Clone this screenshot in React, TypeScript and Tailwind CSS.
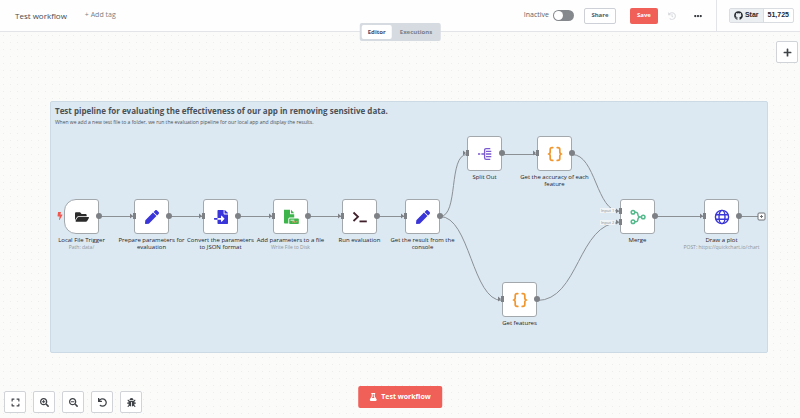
import type { ReactNode } from "react";
import {
  FaBolt,
  FaBug,
  FaEllipsisH,
  FaExpand,
  FaFileImport,
  FaFlask,
  FaFolderOpen,
  FaGithub,
  FaHistory,
  FaPen,
  FaPlus,
  FaSearchMinus,
  FaSearchPlus,
  FaUndo,
} from "react-icons/fa";

type FlowNode = {
  id: string;
  x: number;
  y: number;
  label: string;
  note?: string;
  icon: ReactNode;
  trigger?: boolean;
  inputs?: number[];
};

const BracesIcon = () => (
  <svg viewBox="0 0 16 16" className="size-4" fill="none" stroke="#f0962e" strokeWidth="1.7" strokeLinecap="round" strokeLinejoin="round">
    <path d="M5.8 1.6H5C3.8 1.6 3.2 2.3 3.2 3.4v2.4c0 1.2-.6 2.2-1.7 2.2 1.1 0 1.7 1 1.7 2.2v2.4c0 1.1.6 1.8 1.8 1.8h.8" />
    <path d="M10.2 1.6h.8c1.2 0 1.8.7 1.8 1.8v2.4c0 1.2.6 2.2 1.7 2.2-1.1 0-1.7 1-1.7 2.2v2.4c0 1.1-.6 1.8-1.8 1.8h-.8" />
  </svg>
);

const TerminalIcon = () => (
  <svg viewBox="0 0 16 16" className="size-4" fill="none" stroke="#40202a" strokeWidth="1.8">
    <path d="M1.5 3.5 6 7.8 1.5 12" />
    <path d="M7.5 12.4h7.3" />
  </svg>
);

const SplitIcon = () => (
  <svg viewBox="0 0 16 16" className="size-4" fill="none" stroke="#7a5ad0" strokeWidth="1.3">
    <path d="M1 8h2.2M4.4 8h3" />
    <path d="M10 2.6h-.8c-1.1 0-1.6.6-1.6 1.6v7.6c0 1 .5 1.6 1.6 1.6h.8" />
    <path d="M10 2.6h3.3M9 5.4h5.3M9 8h5.3M9 10.7h5.3M10 13.4h3.3" />
  </svg>
);

const MergeIcon = () => (
  <svg viewBox="0 0 16 16" className="size-4" fill="none" stroke="#54b98c" strokeWidth="1.5">
    <circle cx="3" cy="3.2" r="1.8" />
    <circle cx="3" cy="12.8" r="1.8" />
    <circle cx="13.2" cy="8" r="1.8" />
    <path d="M4.8 3.2h1c1.2 0 1.7.6 1.9 1.5l.3 1.5C8.3 7.4 8.9 8 10 8h1.4M4.8 12.8h1c1.2 0 1.7-.6 1.9-1.5l.3-1.5C8.3 8.6 8.9 8 10 8" />
  </svg>
);

const GlobeIcon = () => (
  <svg viewBox="0 0 16 16" className="size-4" fill="none" stroke="#3a35d8" strokeWidth="1.4">
    <circle cx="8" cy="8" r="6.6" />
    <ellipse cx="8" cy="8" rx="3" ry="6.6" />
    <path d="M1.8 5.7h12.4M1.8 10.3h12.4" />
  </svg>
);

const FileWriteIcon = () => (
  <svg viewBox="0 0 16 16" className="size-4">
    <path fill="#3db54a" d="M1 .8h6v4.4h4.2v3.3H7c-1 0-1.7.7-1.7 1.7v4.3H1.8c-.5 0-.8-.3-.8-.8z" />
    <path fill="#3db54a" d="M8 .8l3.2 3.4H8z" />
    <rect x="6.2" y="9.6" width="9.6" height="5.4" rx=".8" fill="#3db54a" />
    <path d="M7.5 11.2h3.8" stroke="#fff" strokeWidth=".9" />
    <path d="M9.8 13.6v-1.2h1.7v1.2M12.8 13.6l1.7-1.8" stroke="#e3a070" strokeWidth="1" fill="none" />
  </svg>
);

const pen = <FaPen className="size-3.5 text-[#3a35d8]" />;

const nodes: FlowNode[] = [
  { id: "trigger", x: 64, y: 167, label: "Local File Trigger", note: "Path: data/", trigger: true, inputs: [], icon: <FaFolderOpen className="size-3.5 text-[#2b2b2b]" /> },
  { id: "prepare", x: 134, y: 167, label: "Prepare parameters for evaluation", icon: pen },
  { id: "convert", x: 203, y: 167, label: "Convert the parameters to JSON format", icon: <FaFileImport className="size-3.5 text-[#3a35d8]" /> },
  { id: "write", x: 273, y: 167, label: "Add parameters to a file", note: "Write File to Disk", icon: <FileWriteIcon /> },
  { id: "run", x: 342, y: 167, label: "Run evaluation", icon: <TerminalIcon /> },
  { id: "result", x: 405, y: 167, label: "Get the result from the console", icon: pen },
  { id: "split", x: 467, y: 104, label: "Split Out", icon: <SplitIcon /> },
  { id: "accuracy", x: 537, y: 104, label: "Get the accuracy of each feature", icon: <BracesIcon /> },
  { id: "features", x: 502, y: 250, label: "Get features", icon: <BracesIcon /> },
  { id: "merge", x: 620, y: 167, label: "Merge", inputs: [12, 23], icon: <MergeIcon /> },
  { id: "plot", x: 704, y: 167, label: "Draw a plot", note: "POST: https://quickchart.io/chart", icon: <GlobeIcon /> },
];

const wires = [
  "M99 184H134",
  "M169 184H203",
  "M238 184H273",
  "M308 184H342",
  "M377 184H405",
  "M440 184C459 184 448 122 467 122",
  "M440 184C470 184 472 268 502 268",
  "M502 122H537",
  "M572 122C596 122 596 179 620 179",
  "M537 268C579 268 578 190 620 190",
  "M655 184H704",
  "M739 184H758",
];

function NodeCard({ node }: { node: FlowNode }) {
  const inputs = node.inputs ?? [17];
  return (
    <div className="absolute size-[35px]" style={{ left: node.x, top: node.y }}>
      <div
        className={`flex size-full items-center justify-center border border-[#a3a8ad] bg-white ${
          node.trigger ? "rounded-l-[12px] rounded-r-[3px]" : "rounded-[3px]"
        }`}
      >
        {node.icon}
      </div>
      {node.trigger && <FaBolt className="absolute top-[13px] -left-2 size-2 text-[#f0584f]" />}
      {inputs.map((top) => (
        <svg key={top} viewBox="0 0 6 6" className="absolute -left-1 size-[6px]" style={{ top: top - 3 }} fill="#7d8186">
          <path d="M0 .4 3 3 0 5.6z" />
          <path d="M3 0h3v6H3z" />
        </svg>
      ))}
      <span className="absolute top-[14px] -right-[3px] size-[6px] rounded-full bg-[#7d8186]" />
      <div className="absolute top-[38px] left-1/2 w-[70px] -translate-x-1/2 text-center text-[6px] leading-[7px]">
        <p className="font-medium text-[#1f2328]">{node.label}</p>
        {node.note && <p className="-mx-2 whitespace-nowrap text-[5px] text-[#8d949c]">{node.note}</p>}
      </div>
    </div>
  );
}

const zoomTools = [
  { name: "Fit to view", icon: <FaExpand className="size-[9px]" /> },
  { name: "Zoom in", icon: <FaSearchPlus className="size-[9px]" /> },
  { name: "Zoom out", icon: <FaSearchMinus className="size-[9px]" /> },
  { name: "Reset zoom", icon: <FaUndo className="size-[9px]" /> },
  { name: "Debug", icon: <FaBug className="size-[9px]" /> },
];

export default function App() {
  return (
    <div className="flex h-screen flex-col overflow-hidden bg-[#fbfbfa] font-['Open_Sans','Noto_Sans',sans-serif] text-[#45494f]">
      <header className="relative z-10 flex h-8 shrink-0 items-stretch border-b border-[#e3e4e8] bg-[#fefefe] text-[7px]">
        <div className="flex flex-1 items-center gap-[18px] pl-[15px]">
          <h1 className="text-[8px] leading-[10px]">Test workflow</h1>
          <button type="button" className="text-[#7a7e84]">+ Add tag</button>
        </div>
        <div className="flex items-center">
          <label className="flex items-center gap-1 text-[#5d6167]">
            Inactive
            <input
              type="checkbox"
              role="switch"
              className="h-[11px] w-[21px] appearance-none rounded-full bg-[#85888d] p-px before:block before:size-[9px] before:rounded-full before:bg-white"
            />
          </label>
          <button type="button" className="ml-[10px] h-4 w-8 rounded-[2px] border border-[#cdd0d6] bg-white text-[6px] font-bold text-[#55595f]">Share</button>
          <button type="button" className="ml-[14px] h-4 w-7 rounded-[2px] bg-[#f05f58] text-[6px] font-bold text-white">Save</button>
          <button type="button" aria-label="Workflow history" className="ml-[10px] text-[#d8dade]">
            <FaHistory className="size-2" />
          </button>
          <button type="button" aria-label="More actions" className="mr-[14px] ml-[18px] text-[#33363b]">
            <FaEllipsisH className="size-2" />
          </button>
        </div>
        <div className="flex items-center border-l border-[#e3e4e8] pr-1.5 pl-3">
          <a href="#star" className="flex h-[15px] items-center rounded-[2px] border border-[#d9dce0] bg-white font-['Liberation_Sans',sans-serif] font-bold text-[#24292f]">
            <span className="flex h-full items-center gap-0.5 border-r border-[#d9dce0] bg-[#ebeff2] px-1">
              <FaGithub className="size-[9px]" />
              Star
            </span>
            <span className="px-1">51,725</span>
          </a>
        </div>
        <nav className="absolute top-[23px] left-1/2 flex h-[18px] -translate-x-1/2 gap-0.5 rounded-[2px] bg-[#d6dbe2] p-[2px] text-[6px] font-bold">
          <button type="button" className="rounded-[2px] bg-white px-1.5 text-[#4f4a5c]">Editor</button>
          <button type="button" className="px-1.5 text-[#7a7f87]">Executions</button>
        </nav>
      </header>

      <main className="relative flex-1 bg-[radial-gradient(circle,#eeeeec_0.5px,transparent_1px)] bg-size-[7px_7px]">
        <section className="absolute top-[69px] left-[50px] h-[252px] w-[718px] rounded-[2px] border border-[#cbdae4] bg-[#dce9f2] px-1 py-1">
          <h2 className="text-[8px] leading-[10px] font-bold text-[#4a5158]">
            Test pipeline for evaluating the effectiveness of our app in removing sensitive data.
          </h2>
          <p className="mt-[3px] text-[5px] leading-[7px] text-[#4a5158]">
            When we add a new test file to a folder, we run the evaluation pipeline for our local app and display the results.
          </p>
        </section>

        <svg className="absolute inset-0 size-full" fill="none" stroke="#8b9095" strokeWidth="1">
          {wires.map((d) => (
            <path key={d} d={d} transform="translate(0 .5)" />
          ))}
        </svg>

        {nodes.map((node) => (
          <NodeCard key={node.id} node={node} />
        ))}

        <span className="absolute top-[176px] left-[600px] bg-[#f0f4f7] px-px text-[4px] leading-[5px] text-[#85898f]">Input 1</span>
        <span className="absolute top-[188px] left-[600px] bg-[#f0f4f7] px-px text-[4px] leading-[5px] text-[#85898f]">Input 2</span>

        <button type="button" aria-label="Add step after Draw a plot" className="absolute top-[180px] left-[757px] size-[9px] text-[#6d7176]">
          <svg viewBox="0 0 9 9" className="size-full" stroke="currentColor">
            <rect x="1" y="1" width="7" height="7" rx="1" fill="#fff" />
            <path d="M3 4.5h3M4.5 3v3" />
          </svg>
        </button>

        <button type="button" aria-label="Add node" className="absolute top-[9px] right-[2px] flex size-[22px] items-center justify-center rounded-[2px] border border-[#d0d3d8] bg-white text-[#3f4348]">
          <FaPlus className="size-[9px]" />
        </button>

        <div className="absolute bottom-[5px] left-1 flex gap-[7px]">
          {zoomTools.map((tool) => (
            <button key={tool.name} type="button" aria-label={tool.name} className="flex size-[22px] items-center justify-center rounded-[2px] border border-[#d0d3d8] bg-white text-[#3f4348]">
              {tool.icon}
            </button>
          ))}
        </div>

        <button type="button" className="absolute bottom-[10px] left-1/2 flex h-[22px] -translate-x-1/2 items-center gap-1 rounded-[2px] bg-[#f05f58] px-[11px] text-[7px] font-bold text-white">
          <FaFlask className="size-2" />
          Test workflow
        </button>
      </main>
    </div>
  );
}
